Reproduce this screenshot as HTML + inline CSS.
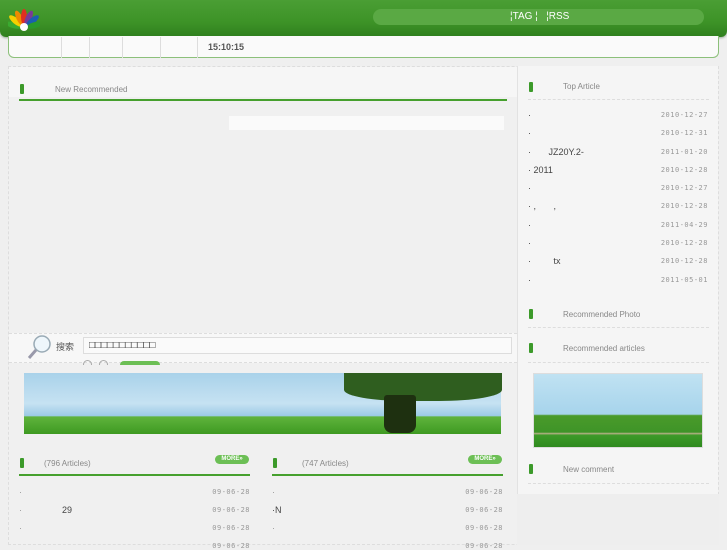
<!DOCTYPE html>
<html><head><meta charset="utf-8"><style>
*{margin:0;padding:0;box-sizing:border-box}
body{width:727px;height:545px;overflow:hidden;background:#efefef;font-family:"Liberation Sans","Noto Sans CJK SC",sans-serif;position:relative;font-size:9px;color:#999}
.a{position:absolute}
.hd{left:0;top:0;width:727px;height:37px;background:linear-gradient(180deg,#4a9e34 0%,#3d9327 60%,#2f7f1e 100%);border-radius:0 0 6px 6px;box-shadow:0 1px 2px #9a9}
.pill{left:373px;top:9px;width:331px;height:16px;border-radius:8px;background:#5aa944}
.nav{left:8px;top:36px;width:711px;height:22px;background:#fafafa;border:1px solid #8cc07a;border-top:none;border-radius:0 0 6px 6px}
.sep{top:37px;width:1px;height:21px;background:#ddd}
.main{left:8px;top:66px;width:711px;height:479px;border:1px dashed #ddd;background:#f0f0f0}
.right{left:517px;top:66px;width:201px;height:428px;background:#f5f5f5;border-left:1px solid #e2e2e2}
.mk{width:4px;height:10px;background:#3c9a2a;border-radius:1px}
.ttl{font-size:8px;color:#888}
.gl{height:2px;background:#46a02e}
.dl{height:1px;border-top:1px dashed #ddd}
.dt{font-family:"DejaVu Sans Mono",monospace;font-size:7px;color:#999;letter-spacing:.5px;text-align:right}
.more{width:34px;height:9px;border-radius:5px;background:#6cbf55;color:#fff;font-size:6px;text-align:center;line-height:9px;font-weight:bold}
</style></head><body>
<div class="a hd"></div>
<svg class="a" style="left:8px;top:4px" width="32" height="28" viewBox="0 0 32 28">
<g transform="translate(16 24)">
<ellipse cx="0" cy="-11" rx="3" ry="8" fill="#3aaa30" transform="rotate(-75)"/>
<ellipse cx="0" cy="-11" rx="3" ry="8" fill="#f5d000" transform="rotate(-50)"/>
<ellipse cx="0" cy="-11" rx="3" ry="8" fill="#f08a00" transform="rotate(-25)"/>
<ellipse cx="0" cy="-11" rx="3" ry="8" fill="#e03020"/>
<ellipse cx="0" cy="-11" rx="3" ry="8" fill="#7a3a98" transform="rotate(25)"/>
<ellipse cx="0" cy="-11" rx="3" ry="8" fill="#1a5fb0" transform="rotate(50)"/>
<ellipse cx="0" cy="-11" rx="3" ry="8" fill="#2a9a2a" transform="rotate(75)"/>
<circle cx="0" cy="-1" r="4" fill="#fff"/>
</g>
</svg>
<div class="a pill"></div>
<div class="a" style="left:510px;top:11px;color:#fff;font-size:10px">¦TAG ¦ &nbsp; ¦RSS</div>
<div class="a nav"></div>
<div class="a sep" style="left:61px"></div><div class="a sep" style="left:89px"></div><div class="a sep" style="left:122px"></div><div class="a sep" style="left:160px"></div><div class="a sep" style="left:197px"></div>
<div class="a" style="left:208px;top:42px;font-size:9px;font-weight:bold;color:#555">15:10:15</div>
<div class="a main"></div>
<div class="a" style="left:9px;top:67px;width:508px;height:30px;background:#f6f6f6"></div>
<div class="a mk" style="left:20px;top:84px"></div>
<div class="a ttl" style="left:55px;top:85px">New Recommended</div>
<div class="a gl" style="left:19px;top:99px;width:488px"></div>
<div class="a" style="left:229px;top:116px;width:275px;height:14px;background:#fafafa"></div>
<div class="a" style="left:9px;top:333px;width:508px;height:30px;background:#f7f7f7;border-top:1px dashed #ddd;border-bottom:1px dashed #ddd"></div>
<svg class="a" style="left:26px;top:334px" width="26" height="28"><circle cx="16" cy="10" r="8" fill="#eef6fb" stroke="#99aab5" stroke-width="1.5"/><line x1="10" y1="16" x2="3" y2="24" stroke="#99a" stroke-width="3"/></svg>
<div class="a" style="left:56px;top:340px;font-size:9px;color:#555">搜索</div>
<div class="a" style="left:83px;top:337px;width:429px;height:17px;background:#fafafa;border:1px solid #ddd;font-size:10px;color:#333;padding:2px 5px">□□□□□□□□□□□</div>
<div class="a" style="left:83px;top:360px;width:9px;height:5px;border:1px solid #aaa;border-bottom:none;border-radius:5px 5px 0 0"></div>
<div class="a" style="left:99px;top:360px;width:9px;height:5px;border:1px solid #aaa;border-bottom:none;border-radius:5px 5px 0 0"></div>
<div class="a" style="left:120px;top:361px;width:40px;height:4px;background:#6cbf55;border-radius:4px 4px 0 0"></div>
<div class="a" style="left:24px;top:373px;width:477px;height:61px;background:linear-gradient(180deg,#a9d2ea 0%,#c6e2f2 50%,#9ccbe6 70%,#5fb33c 72%,#3e9a22 100%)"></div>
<div class="a" style="left:344px;top:373px;width:158px;height:28px;background:#2f5e1f;border-radius:0 0 40% 40%"></div>
<div class="a" style="left:384px;top:395px;width:32px;height:38px;background:#1e3010;border-radius:3px 3px 8px 8px"></div>
<div class="a mk" style="left:20px;top:458px"></div>
<div class="a ttl" style="left:44px;top:459px">(796 Articles)</div>
<div class="a more" style="left:215px;top:455px">MORE»</div>
<div class="a gl" style="left:19px;top:474px;width:231px"></div>
<div class="a mk" style="left:273px;top:458px"></div>
<div class="a ttl" style="left:302px;top:459px">(747 Articles)</div>
<div class="a more" style="left:468px;top:455px">MORE»</div>
<div class="a gl" style="left:272px;top:474px;width:231px"></div>
<div class="a" style="left:19px;top:487px">·</div><div class="a dt" style="left:200px;top:488px;width:50px">09-06-28</div>
<div class="a" style="left:19px;top:505px">·</div><div class="a" style="left:62px;top:505px;font-size:9px;color:#444">29</div><div class="a dt" style="left:200px;top:506px;width:50px">09-06-28</div>
<div class="a" style="left:19px;top:523px">·</div><div class="a dt" style="left:200px;top:524px;width:50px">09-06-28</div>
<div class="a dt" style="left:200px;top:542px;width:50px">09-06-28</div>
<div class="a" style="left:272px;top:487px">·</div><div class="a dt" style="left:453px;top:488px;width:50px">09-06-28</div>
<div class="a" style="left:272px;top:505px;font-size:9px;color:#444">·N</div><div class="a dt" style="left:453px;top:506px;width:50px">09-06-28</div>
<div class="a" style="left:272px;top:523px">·</div><div class="a dt" style="left:453px;top:524px;width:50px">09-06-28</div>
<div class="a dt" style="left:453px;top:542px;width:50px">09-06-28</div>
<div class="a right"></div>
<div class="a mk" style="left:529px;top:82px"></div>
<div class="a ttl" style="left:563px;top:82px">Top Article</div>
<div class="a dl" style="left:528px;top:99px;width:181px"></div>
<div class="a" style="left:528px;top:106px;width:180px;font-size:9px;line-height:18.3px;color:#444">
<div>·</div><div>·</div><div>· &nbsp; &nbsp; &nbsp; JZ20Y.2-</div><div>· 2011</div><div>·</div><div>· , &nbsp; &nbsp; &nbsp; ,</div><div>·</div><div>·</div><div>· &nbsp; &nbsp; &nbsp; &nbsp; tx</div><div>·</div></div>
<div class="a dt" style="left:640px;top:106px;width:68px;line-height:18.3px">2010-12-27<br>2010-12-31<br>2011-01-20<br>2010-12-28<br>2010-12-27<br>2010-12-28<br>2011-04-29<br>2010-12-28<br>2010-12-28<br>2011-05-01</div>
<div class="a mk" style="left:529px;top:309px"></div>
<div class="a ttl" style="left:563px;top:310px">Recommended Photo</div>
<div class="a dl" style="left:528px;top:327px;width:181px"></div>
<div class="a mk" style="left:529px;top:343px"></div>
<div class="a ttl" style="left:563px;top:344px">Recommended articles</div>
<div class="a dl" style="left:528px;top:362px;width:181px"></div>
<div class="a" style="left:533px;top:373px;width:170px;height:75px;border:1px solid #ddd;background:linear-gradient(180deg,#c0e2f2 0%,#a7d4ec 55%,#4a9a2a 57%,#3e9428 80%,#b9b08a 81%,#3c9a28 84%,#2f8a1f 100%)"></div>
<div class="a mk" style="left:529px;top:464px"></div>
<div class="a ttl" style="left:563px;top:465px">New comment</div>
<div class="a dl" style="left:528px;top:483px;width:181px"></div>
<div class="a" style="left:517px;top:494px;width:202px;height:51px;background:#eeeeee"></div>
</body></html>
